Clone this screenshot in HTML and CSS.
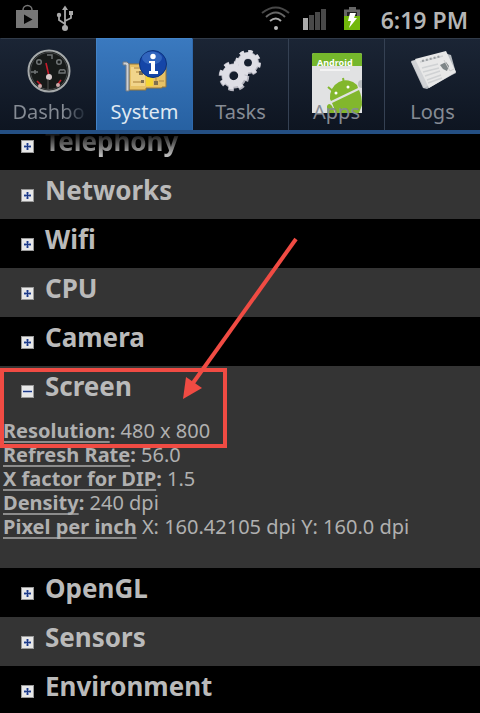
FILE: index.html
```html
<!DOCTYPE html>
<html lang="en">
<head>
<meta charset="utf-8">
<title>System</title>
<link rel="stylesheet" href="styles.css">
</head>
<body>
<div class="app">
  <header class="status">
    <svg class="status-left" width="60" height="32" viewBox="0 0 60 32" aria-hidden="true">
      <path d="M7 12V10a4.500 4.500 0 0 1 9 0V12" fill="none" stroke="#777" stroke-width="1.500"/>
      <path d="M0 10H22V28H0Z" fill="#777"/>
      <path d="M8 14.500 16.500 19.500 8 24Z" fill="#050505"/>
      <g fill="none" stroke="#aaa" stroke-width="1.800"><path d="M49 8V28M49 24 43 20V15M49 21 55 18V14"/></g>
      <g fill="#aaa"><path d="M46 10 49 5.500 52 10Z"/><circle cx="49" cy="28" r="3"/><circle cx="43" cy="15" r="2.200"/><path d="M53 11H57V15H53Z"/></g>
    </svg>
    <div class="status-right">
      <svg width="102" height="32" viewBox="0 0 102 32" aria-hidden="true">
        <g fill="none" stroke-width="2"><path d="M1 13Q15 2 28 13" stroke="#484848"/><path d="M5 17Q15 8 24 17" stroke="#666"/><path d="M9 21Q15 16 20 21" stroke="#aaa"/></g>
        <circle cx="15" cy="28" r="2" fill="#bbb"/>
        <path d="M42 18H47V30H42Z" fill="#aaa"/>
        <path d="M48 15H53V30H48ZM54 12H59V30H54ZM60 9H65V30H60Z" fill="#494949"/>
        <path d="M83 9.500H88V7H95V9.500H99V16H83Z" fill="#666"/>
        <path d="M86 12H96V16H86Z" fill="#222"/>
        <path d="M83 16H99V30H83Z" fill="#72b80b"/>
        <path d="M89 13H95L93 18H96L88 28 90 21H87Z" fill="#fff"/>
      </svg>
      <span class="clock">6:19 PM</span>
    </div>
  </header>

  <nav class="tabs">
    <button class="tab" type="button">
      <svg class="tab-icon" width="48" height="48" viewBox="0 0 48 48" aria-hidden="true">
        <circle cx="24" cy="24" r="20.500" fill="#171a19" stroke="#a5a9aa" stroke-width="2"/>
        <circle cx="24" cy="24" r="18.500" fill="none" stroke="#45484a"/>
        <g fill="none" stroke="#6f7374" stroke-width="1.500"><circle cx="14" cy="15" r="2.300"/><circle cx="34" cy="15" r="2.300"/><path d="M6 25H13M10 23V27M22 8H27V12M34 26Q34 22 37 23Q41 22 40 26Z"/></g>
        <path d="M24 29 21 16M16 38 12 34M33 37 36 33" stroke="#c91c2c" stroke-width="1.600"/>
        <circle cx="24" cy="30" r="3" fill="#d9cccc"/><circle cx="15" cy="39" r="2" fill="#caa"/><circle cx="33" cy="38" r="2" fill="#caa"/>
        <path d="M23 32V42" stroke="#555"/>
      </svg>
      <span class="tab-label tab-label-fade">Dashbo</span>
    </button>
    <button class="tab tab-active" type="button">
      <svg class="tab-icon" width="48" height="48" viewBox="0 0 48 48" aria-hidden="true">
        <path d="M8 17H45V40H41V41H25V43H8Z" fill="#e7c266" stroke="#96763a"/>
        <path d="M10 20H24V39H10Z" fill="#f1d58b"/>
        <path d="M25 29H32V39H25Z" fill="#f6d633"/>
        <path d="M13 21H19M15 25H21M12 35H20M35 31V38M38 34H43" stroke="#c29d55" stroke-width="1.500"/>
        <path d="M18 24H22V28H18ZM20 33H23V36H20ZM33 34H37V38H33Z" fill="#80704e"/>
        <path d="M2 15H6L8 17V44H5V18H2Z" fill="#ccd0d4" stroke="#737a82"/>
        <circle cx="32" cy="17" r="13.500" fill="#1546a8" stroke="#0c337e"/>
        <ellipse cx="31" cy="11" rx="10" ry="6.500" fill="#4579cb" opacity=".6"/>
        <circle cx="32" cy="9.500" r="2.700" fill="#fff"/>
        <path d="M28 14H34V24H37V27H28V24H30V16H28Z" fill="#fff"/>
      </svg>
      <span class="tab-label">System</span>
    </button>
    <button class="tab" type="button">
      <svg class="tab-icon" width="48" height="48" viewBox="0 0 48 48" aria-hidden="true">
        <g fill="none" stroke="#b5b5bf">
          <circle cx="17" cy="29" r="8.500" stroke-width="8"/>
          <circle cx="17" cy="29" r="13" stroke-width="4.500" stroke-dasharray="5.200 5.010"/>
          <circle cx="31" cy="16" r="7.500" stroke-width="7"/>
          <circle cx="31" cy="16" r="11" stroke-width="4" stroke-dasharray="4.300 4.340"/>
        </g>
        <g fill="none" stroke="#dedee5">
          <circle cx="16.500" cy="28.500" r="8" stroke-width="6.500"/>
          <circle cx="16.500" cy="28.500" r="12" stroke-width="4" stroke-dasharray="4.700 4.725"/>
          <circle cx="31" cy="15.500" r="7" stroke-width="6"/>
          <circle cx="31" cy="15.500" r="10.500" stroke-width="4" stroke-dasharray="4 4.247"/>
        </g>
      </svg>
      <span class="tab-label">Tasks</span>
    </button>
    <button class="tab" type="button">
      <svg class="tab-icon tab-icon-tall" width="52" height="62" viewBox="0 0 52 62" aria-hidden="true">
        <path d="M1 3Q1 1 3 1H49Q51 1 51 3V61H1Z" fill="#e1e2e3"/>
        <path d="M1 14V3Q1 1 3 1H49Q51 1 51 3V14Z" fill="#75b72c"/>
        <text class="cover-text" x="6" y="14">Android</text>
        <path d="M9 18H39" stroke="#f3f3f3" stroke-width="2"/>
        <path d="M19 47A16 17 0 0 1 46 33L47 36 20 49Z" fill="#82b72d"/>
        <path d="M21 51 48 38Q51 44 51 53L48 61H25Z" fill="#82b72d"/>
        <path d="M16 54Q18 50 21 54L24 61H16Z" fill="#82b72d"/>
        <path d="M23 40 17 35M33 31 32 26" stroke="#82b72d" stroke-width="2"/>
        <circle cx="25" cy="41" r="1.500" fill="#fff"/><circle cx="37" cy="35" r="1.500" fill="#fff"/>
        <path d="M51 28A4 4 0 0 0 51 36Z" fill="#b9bdc0"/>
      </svg>
      <span class="tab-label">Apps</span>
    </button>
    <button class="tab" type="button">
      <svg class="tab-icon" width="48" height="48" viewBox="0 0 48 48" aria-hidden="true">
        <path d="M2 15 35 6 42 8 47 26 43 28 18 42 14 41Z" fill="#b7bbc0"/>
        <path d="M2 14 36 5 46 25 15 41Z" fill="#d1d3d6"/>
        <path d="M6 12 37 4 47 25 20 41Z" fill="#e8e8e8"/>
        <path d="M11 15 34 9M13 21 29 17M14 25 30 21M16 29 31 24M18 33 32 28M19 36 33 31" stroke="#d0d2d4" stroke-width="1.400"/>
        <path d="M13 14 32 9" stroke="#999da0" stroke-width="2" stroke-dasharray="2 2"/>
        <path d="M31 18 37 15 40 19 38 24 34 22Z" fill="#7e8587"/>
        <path d="M35 13 41 24 45 22" fill="none" stroke="#ccc"/>
      </svg>
      <span class="tab-label">Logs</span>
    </button>
  </nav>

  <main class="list">
    <section class="group group-scrolled"><button class="group-head" type="button"><span class="toggle"></span>Telephony</button></section>
    <section class="group"><button class="group-head" type="button"><span class="toggle"></span>Networks</button></section>
    <section class="group"><button class="group-head" type="button"><span class="toggle"></span>Wifi</button></section>
    <section class="group"><button class="group-head" type="button"><span class="toggle"></span>CPU</button></section>
    <section class="group"><button class="group-head" type="button"><span class="toggle"></span>Camera</button></section>
    <section class="group">
      <button class="group-head" type="button" aria-expanded="true"><span class="toggle toggle-open"></span>Screen</button>
      <div class="details">
        <p><b><u>Resolution</u>:</b> 480 x 800</p>
        <p><b><u>Refresh Rate</u>:</b> 56.0</p>
        <p><b><u>X factor for DIP</u>:</b> 1.5</p>
        <p><b><u>Density</u>:</b> 240 dpi</p>
        <p><b><u>Pixel per inch</u></b> X: 160.42105 dpi Y: 160.0 dpi</p>
      </div>
      <div class="callout"></div>
      <svg class="arrow" width="124" height="170" viewBox="0 0 124 170" aria-hidden="true">
        <path d="M120 7 17 151" stroke="#f04b43" stroke-width="4"/>
        <path d="M7 167 10 145 26 156Z" fill="#f04b43"/>
      </svg>
    </section>
    <section class="group"><button class="group-head" type="button"><span class="toggle"></span>OpenGL</button></section>
    <section class="group"><button class="group-head" type="button"><span class="toggle"></span>Sensors</button></section>
    <section class="group"><button class="group-head" type="button"><span class="toggle"></span>Environment</button></section>
  </main>
</div>
</body>
</html>
```
FILE: styles.css
```css
* { box-sizing: border-box; }

body {
  margin: 0;
  background: #000;
  color: #bababa;
  font-family: "Noto Sans", "Open Sans", sans-serif;
}

button {
  border: 0;
  margin: 0;
  font: inherit;
  color: inherit;
}

.app {
  display: flex;
  flex-direction: column;
  height: 100vh;
  overflow: hidden;
}

.status {
  display: flex;
  justify-content: space-between;
  flex: none;
  height: 38px;
  padding: 0 12px 0 16px;
}

.status-right {
  display: flex;
  gap: 18px;
}

.clock {
  font-size: 23px;
  font-weight: 600;
  line-height: 40px;
  color: #b5b5b5;
}

.tabs {
  display: grid;
  grid-template-columns: repeat(5, 1fr);
  flex: none;
  height: 96px;
  border-bottom: 4px solid #244f83;
  background: linear-gradient(#1b2535, #0e1521);
}

.tab {
  display: flex;
  flex-direction: column;
  align-items: center;
  justify-content: space-between;
  min-width: 0;
  padding: 8px 0 2px;
  border-top: 1px solid #313b49;
  border-left: 1px solid #354153;
  background: none;
  color: #858b94;
}

.tab:first-child { border-left-color: transparent; }

.tab-active {
  border-color: #4383c7;
  background: linear-gradient(#3a79bf, #2761a2);
  color: #dfe8f2;
}

.tab-active + .tab { border-left-color: #2e69ad; }

.tab-icon { flex: none; }

.tab-icon-tall {
  margin: 5px 0 -20px;
}

.tab-label {
  position: relative;
  font-size: 20px;
  line-height: 32px;
}

.tab-label-fade {
  color: transparent;
  background: linear-gradient(90deg, #858b94 70%, #202a38);
  background-clip: text;
}

.cover-text {
  font-size: 9px;
  font-weight: 700;
  fill: #fff;
}

.list {
  flex: 1;
  min-height: 0;
  overflow: hidden;
}

.group {
  position: relative;
  background: #000;
}

.group:nth-child(even) { background: #343434; }

.group-scrolled { margin-top: -13px; }

.group-head {
  display: flex;
  align-items: center;
  gap: 11px;
  width: 100%;
  height: 49px;
  padding: 0 0 10px 21px;
  background: none;
  font-size: 26px;
  font-weight: 700;
  line-height: 38px;
  text-align: left;
}

.group-scrolled .group-head {
  color: transparent;
  background: linear-gradient(#111 26%, #bababa 70%);
  background-clip: text;
}

.toggle {
  flex: none;
  width: 13px;
  height: 13px;
  margin-top: 12px;
  border: 1px solid #999;
  background:
    linear-gradient(#1d3a86, #1d3a86) center / 7px 1px no-repeat,
    linear-gradient(#1d3a86, #1d3a86) center / 1px 7px no-repeat,
    linear-gradient(#8c9cc8, #8c9cc8) center / 7px 3px no-repeat,
    linear-gradient(#8c9cc8, #8c9cc8) center / 3px 7px no-repeat,
    #e8e8e8;
}

.toggle-open {
  background:
    linear-gradient(#1d3a86, #1d3a86) center / 9px 1px no-repeat,
    linear-gradient(#b5bfdc, #b5bfdc) center / 9px 3px no-repeat,
    #e8e8e8;
}

.details {
  padding: 4px 3px 29px;
  color: #b0b0b0;
  font-size: 20px;
  line-height: 24px;
}

.details p { margin: 0; }

.details u {
  text-decoration-color: #8c8c8c;
  text-decoration-thickness: 2px;
  text-underline-offset: 3px;
  text-decoration-skip-ink: none;
}

.callout {
  position: absolute;
  top: 2px;
  left: 0;
  width: 227px;
  height: 80px;
  border: 4px solid #f04b43;
}

.arrow {
  position: absolute;
  bottom: 166px;
  left: 176px;
}
```
